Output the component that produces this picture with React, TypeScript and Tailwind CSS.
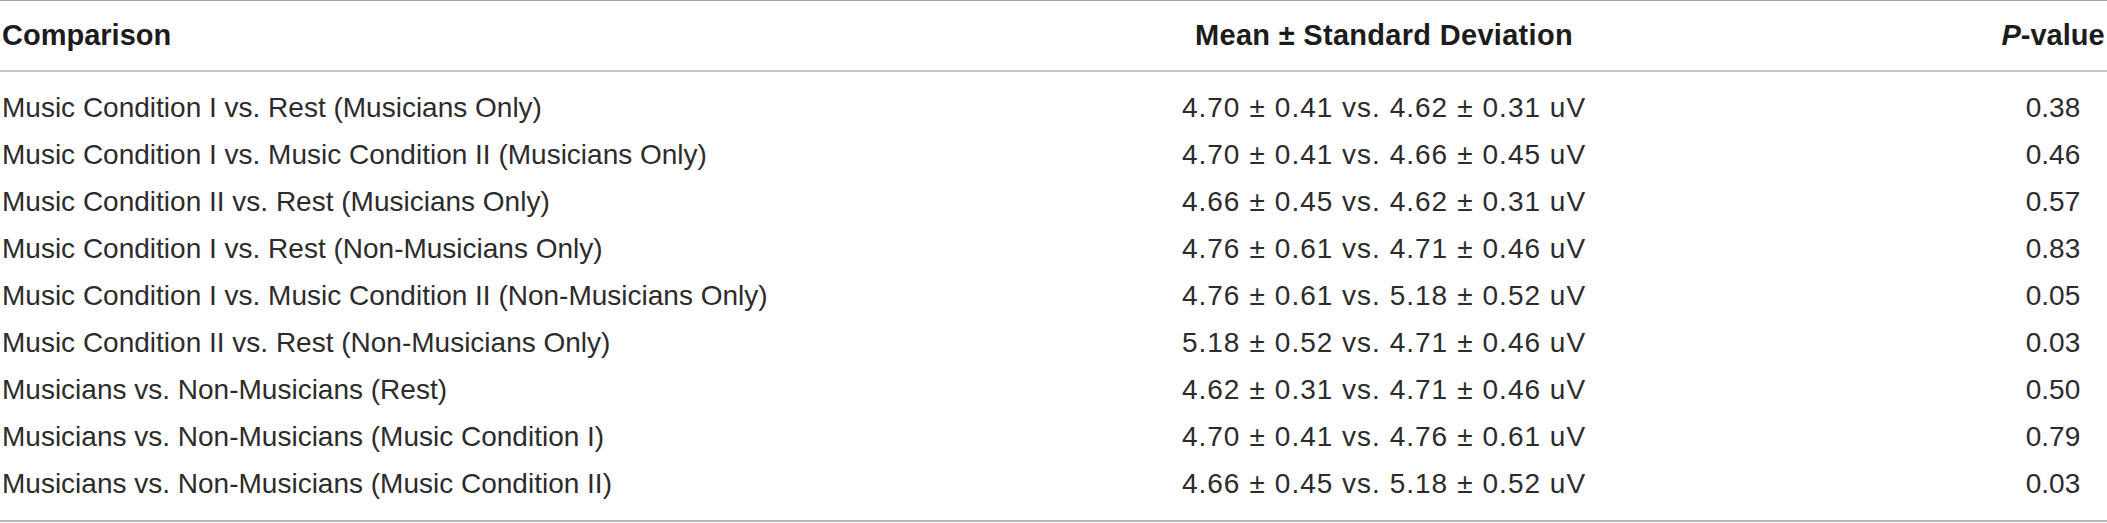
const ROWS: [string, string, string][] = [
  ['Music Condition I vs. Rest (Musicians Only)', '4.70 ± 0.41 vs. 4.62 ± 0.31 uV', '0.38'],
  ['Music Condition I vs. Music Condition II (Musicians Only)', '4.70 ± 0.41 vs. 4.66 ± 0.45 uV', '0.46'],
  ['Music Condition II vs. Rest (Musicians Only)', '4.66 ± 0.45 vs. 4.62 ± 0.31 uV', '0.57'],
  ['Music Condition I vs. Rest (Non-Musicians Only)', '4.76 ± 0.61 vs. 4.71 ± 0.46 uV', '0.83'],
  ['Music Condition I vs. Music Condition II (Non-Musicians Only)', '4.76 ± 0.61 vs. 5.18 ± 0.52 uV', '0.05'],
  ['Music Condition II vs. Rest (Non-Musicians Only)', '5.18 ± 0.52 vs. 4.71 ± 0.46 uV', '0.03'],
  ['Musicians vs. Non-Musicians (Rest)', '4.62 ± 0.31 vs. 4.71 ± 0.46 uV', '0.50'],
  ['Musicians vs. Non-Musicians (Music Condition I)', '4.70 ± 0.41 vs. 4.76 ± 0.61 uV', '0.79'],
  ['Musicians vs. Non-Musicians (Music Condition II)', '4.66 ± 0.45 vs. 5.18 ± 0.52 uV', '0.03'],
];

// the ± sign sits a bit wider in the original typeface
function Mean({ text }: { text: string }) {
  const parts = text.split(' ± ');
  return (
    <>
      {parts.map((p, i) => (
        <span key={i}>
          {i > 0 && <span className="px-[9px]">±</span>}
          {p}
        </span>
      ))}
    </>
  );
}

export default function App() {
  return (
    <div className="w-[2107px] h-[523px] bg-white font-['Liberation_Sans',Arial,sans-serif] text-[28px] text-[#222]">
      {/* Header */}
      <div className="grid grid-cols-[769px_1230px_108px] items-center h-[72px] border-t border-b-2 border-t-[#a8a8a8] border-b-[#c6c6c6] font-bold text-[29px] text-[#1c1c1c]">
        <div className="pl-[2px]">Comparison</div>
        <div className="text-center tracking-[0.3px]">Mean ± Standard Deviation</div>
        <div className="text-center whitespace-nowrap">
          <i>P</i>-value
        </div>
      </div>

      {/* Body */}
      <div className="pt-[12px] pb-[13px] border-b-2 border-[#b8b8b8]">
        {ROWS.map(([comp, mean, p]) => (
          <div key={comp} className="grid grid-cols-[769px_1230px_108px] items-center h-[47px] text-[#2c2c2c]">
            <div className="pl-[2px] whitespace-nowrap">{comp}</div>
            <div className="text-center whitespace-nowrap tracking-[1px]">
              <Mean text={mean} />
            </div>
            <div className="text-center">{p}</div>
          </div>
        ))}
      </div>
    </div>
  );
}
